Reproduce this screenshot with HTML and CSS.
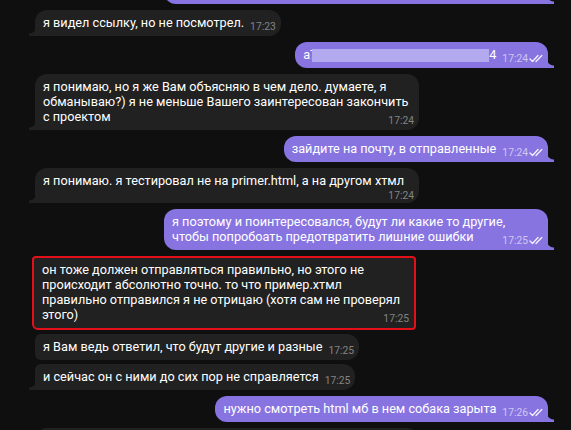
FILE: index.html
```html
<!DOCTYPE html>
<html lang="ru">
<head>
    <meta charset="UTF-8">
    <meta name="viewport" content="width=device-width, initial-scale=1.0">
    <title>Чат</title>
    <link rel="stylesheet" href="styles.css">
</head>
<body>

    <div class="chat">
        <div class="msg out tail full">&nbsp;</div>

        <div class="msg in tail">я видел ссылку, но не посмотрел.<span class="meta">17:23</span></div>

        <div class="msg out tail">a7<span class="redact"></span>4<span class="meta">17:24<svg class="checks" viewBox="0 0 14 9"><path d="M1 5l2.5 2.5L9 1.5M7 7.5L12.8 1.5"/></svg></span></div>

        <div class="msg in tail">я понимаю, но я же Вам объясняю в чем дело. думаете, я обманываю?) я не меньше Вашего заинтересован закончить с проектом<span class="meta">17:24</span></div>

        <div class="msg out tail">зайдите на почту, в отправленные<span class="meta">17:24<svg class="checks" viewBox="0 0 14 9"><path d="M1 5l2.5 2.5L9 1.5M7 7.5L12.8 1.5"/></svg></span></div>

        <div class="msg in tail full">я понимаю. я тестировал не на primer.html, а на другом хтмл<span class="meta below">17:24</span></div>

        <div class="msg out tail">я поэтому и поинтересовался, будут ли какие то другие, чтобы попробоать предотвратить лишние ошибки<span class="meta">17:25<svg class="checks" viewBox="0 0 14 9"><path d="M1 5l2.5 2.5L9 1.5M7 7.5L12.8 1.5"/></svg></span></div>

        <!-- выделено красным на скриншоте -->
        <div class="msg in group-start marked">он тоже должен отправляться правильно, но этого не происходит абсолютно точно. то что пример.хтмл правильно отправился я не отрицаю (хотя сам не проверял этого)<span class="meta">17:25</span></div>

        <div class="msg in group-mid">я Вам ведь ответил, что будут другие и разные<span class="meta">17:25</span></div>

        <div class="msg in group-end tail">и сейчас он с ними до сих пор не справляется<span class="meta">17:25</span></div>

        <div class="msg out tail">нужно смотреть html мб в нем собака зарыта<span class="meta">17:26<svg class="checks" viewBox="0 0 14 9"><path d="M1 5l2.5 2.5L9 1.5M7 7.5L12.8 1.5"/></svg></span></div>

        <div class="msg in full">&nbsp;</div>
    </div>

</body>
</html>
```

FILE: styles.css
```css
html, body {
    height: 100%;
    overflow: hidden;
}
body {
    margin: 0;
    background-color: #0f0f0f;
    color: #fff;
    font-family: Roboto, "Noto Sans", sans-serif;
    font-size: 12.7px;
    line-height: 15px;
}
.chat {
    display: flex;
    flex-direction: column;
    margin-top: -28px;
    padding: 0 23px 0 35px;
}
.msg {
    position: relative;
    display: flow-root;
    box-sizing: border-box;
    max-width: 384px;
    margin-top: 6px;
    padding: 5px 6px 6px 8px;
    border-radius: 12px;
}
.msg.full {
    width: 384px;
}
.in {
    align-self: flex-start;
    background-color: #212121;
}
.out {
    align-self: flex-end;
    background-color: #8774e1;
}

/* хвостик пузыря */
.in.tail {
    border-bottom-left-radius: 0;
}
.out.tail {
    border-bottom-right-radius: 0;
}
.tail::after {
    content: "";
    position: absolute;
    bottom: 0;
    width: 7px;
    height: 10px;
}
.in.tail::after {
    left: -6px;
    background: radial-gradient(circle 8px at 0 0, transparent 7px, #212121 8px);
}
.out.tail::after {
    right: -6px;
    background: radial-gradient(circle 8px at 100% 0, transparent 7px, #8774e1 8px);
}

/* несколько сообщений подряд */
.in.group-start {
    border-bottom-left-radius: 6px;
}
.in.group-mid {
    margin-top: 4px;
    border-top-left-radius: 6px;
    border-bottom-left-radius: 6px;
}
.in.group-end {
    margin-top: 4px;
    border-top-left-radius: 6px;
}

.marked {
    margin-left: -3px;
    padding: 4px 7px 6px 8px;
    border: 2px solid #e3101a;
    border-radius: 4px;
}

.meta {
    float: right;
    display: flex;
    align-items: center;
    margin: 5px -1px -7px 6px;
    font-size: 10.3px;
    line-height: 13px;
    color: rgba(255, 255, 255, 0.45);
}
.meta.below {
    float: none;
    justify-content: flex-end;
    margin: 1px -1px -5px 0;
}
.marked .meta {
    margin-right: -2px;
}
.out .meta {
    color: rgba(255, 255, 255, 0.6);
}
.checks {
    width: 14px;
    height: 9px;
    margin-left: 1px;
    fill: none;
    stroke: rgba(255, 255, 255, 0.9);
    stroke-width: 1.3;
    stroke-linecap: round;
    stroke-linejoin: round;
}

.redact {
    display: inline-block;
    width: 177px;
    height: 13px;
    margin-left: -5px;
    vertical-align: -3px;
    background-color: #b3a9ef;
}
```
